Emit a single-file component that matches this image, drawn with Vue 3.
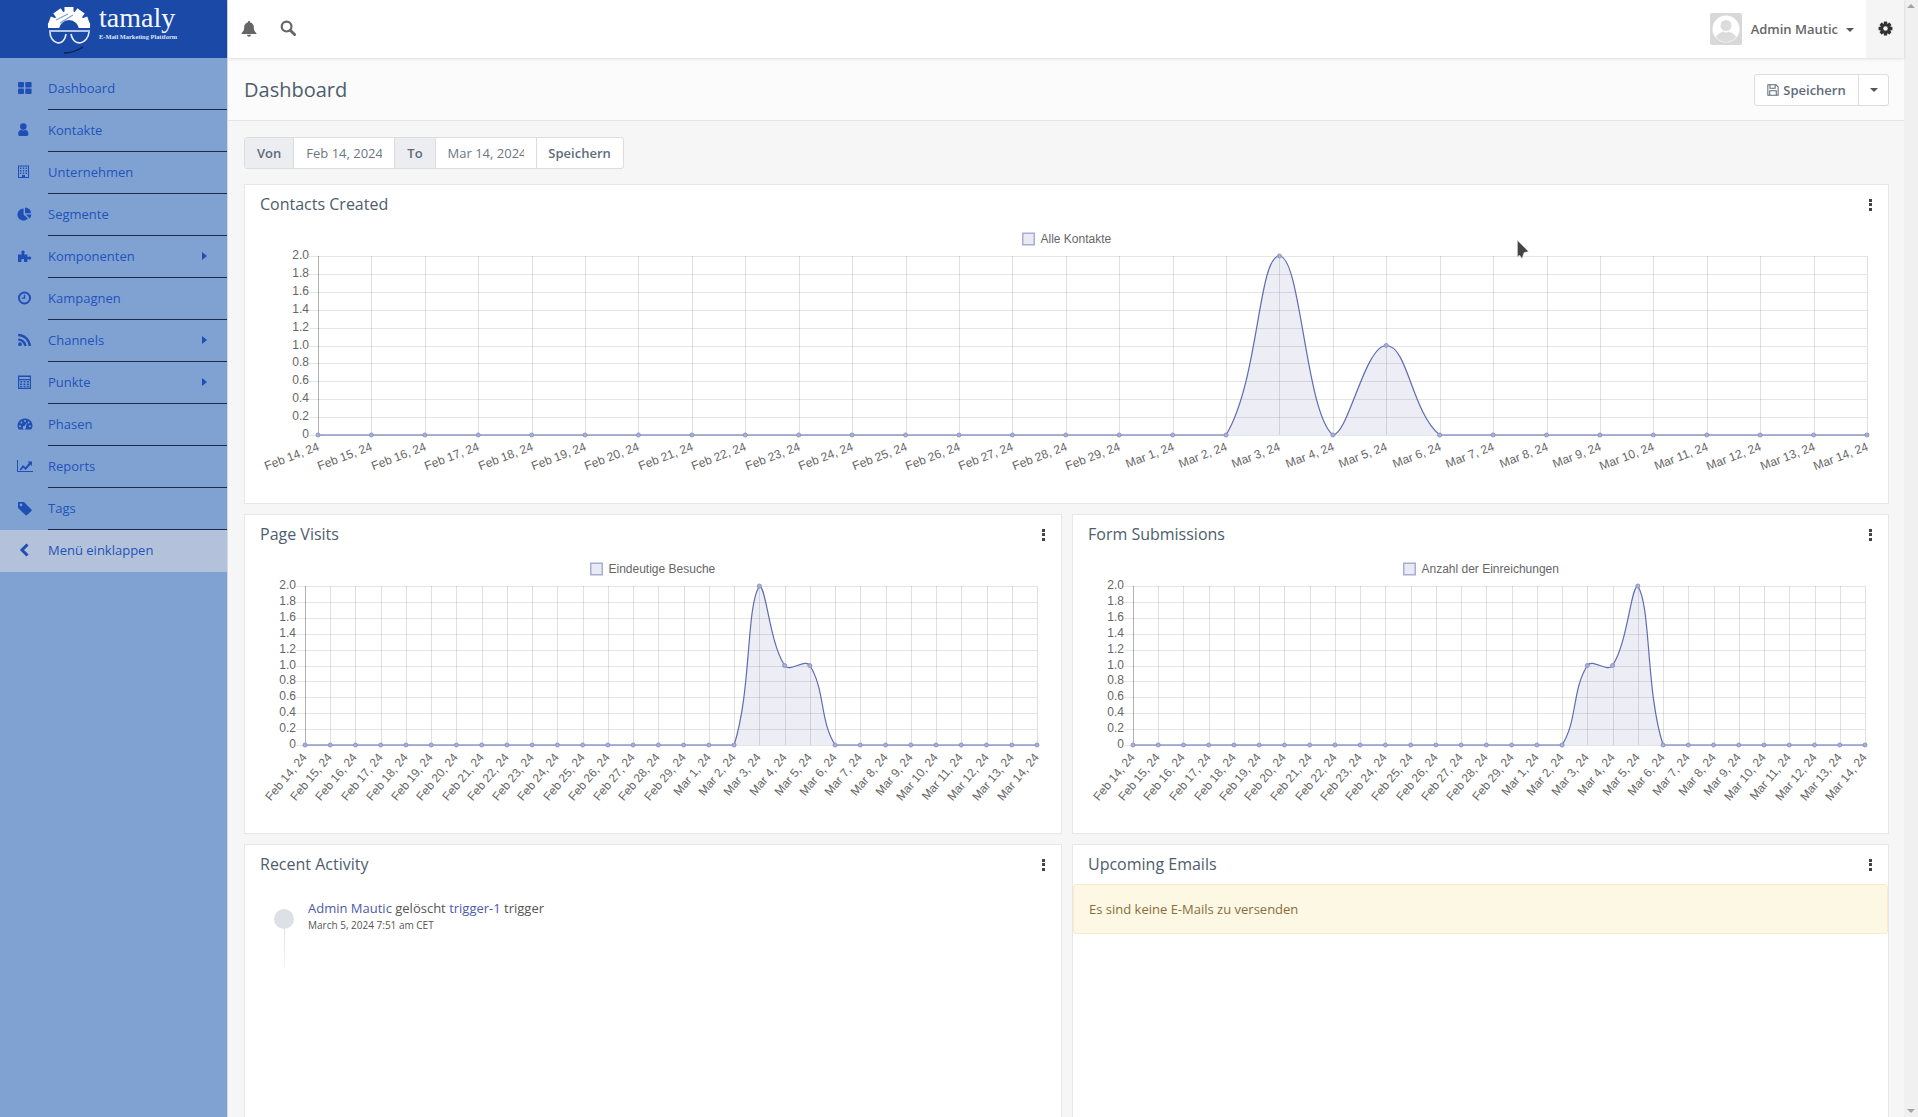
<script setup>
const navItems = [
  { label: "Dashboard", icon: "dashboard" },
  { label: "Kontakte", icon: "user" },
  { label: "Unternehmen", icon: "building" },
  { label: "Segmente", icon: "pie" },
  { label: "Komponenten", icon: "puzzle", sub: true },
  { label: "Kampagnen", icon: "clock" },
  { label: "Channels", icon: "rss", sub: true },
  { label: "Punkte", icon: "calc", sub: true },
  { label: "Phasen", icon: "gauge" },
  { label: "Reports", icon: "line" },
  { label: "Tags", icon: "tag" },
];

// the labels run Feb 14 .. Mar 14 of a leap year
const days = [];
for (let d = 14; d <= 29; d++) days.push(`Feb ${d}, 24`);
for (let d = 1; d <= 14; d++) days.push(`Mar ${d}, 24`);

const TICKS = ["2.0", "1.8", "1.6", "1.4", "1.2", "1.0", "0.8", "0.6", "0.4", "0.2", "0"];

// chart.js style spline with control points capped to the plot area
function splinePath(pts, top, bottom) {
  const t = 0.4;
  const cap = (v) => Math.min(bottom, Math.max(top, v));
  const ctrl = pts.map((p, i) => {
    const a = pts[i - 1] || p;
    const b = pts[i + 1] || p;
    const d1 = Math.hypot(p.x - a.x, p.y - a.y);
    const d2 = Math.hypot(b.x - p.x, b.y - p.y);
    const sum = d1 + d2 || 1;
    const f1 = (t * d1) / sum;
    const f2 = (t * d2) / sum;
    return {
      px: p.x - f1 * (b.x - a.x),
      py: cap(p.y - f1 * (b.y - a.y)),
      nx: p.x + f2 * (b.x - a.x),
      ny: cap(p.y + f2 * (b.y - a.y)),
    };
  });
  let d = `M${pts[0].x} ${pts[0].y}`;
  for (let i = 1; i < pts.length; i++) {
    d += ` C${ctrl[i - 1].nx} ${ctrl[i - 1].ny} ${ctrl[i].px} ${ctrl[i].py} ${pts[i].x} ${pts[i].y}`;
  }
  return d;
}

function makeChart(cfg) {
  const step = (cfg.right - cfg.left) / (days.length - 1);
  const values = days.map(() => 0);
  Object.entries(cfg.data).forEach(([i, v]) => (values[i] = v));
  const pts = values.map((v, i) => ({
    x: cfg.left + i * step,
    y: cfg.bottom - (v / 2) * (cfg.bottom - cfg.top),
  }));
  const line = splinePath(pts, cfg.top, cfg.bottom);
  return {
    ...cfg,
    pts,
    line,
    area: `${line} L${cfg.right} ${cfg.bottom} L${cfg.left} ${cfg.bottom} Z`,
    vLines: days.map((_, i) => Math.round(cfg.left + i * step) + 0.5),
    hLines: TICKS.map((label, i) => ({
      label,
      y: Math.round(cfg.top + (i * (cfg.bottom - cfg.top)) / 10) + 0.5,
    })),
    viewBox: `${cfg.x} ${cfg.y} ${cfg.w} ${cfg.h}`,
  };
}

const contacts = makeChart({
  x: 245, y: 224, w: 1643, h: 279,
  left: 318, right: 1867, top: 256, bottom: 435,
  legend: "Alle Kontakte", boxX: 1022, legendY: 239,
  angle: -21, dx: 0, dy: 11,
  data: { 18: 2, 20: 1 },
});
const visits = makeChart({
  x: 245, y: 554, w: 816, h: 279,
  left: 305, right: 1037, top: 586, bottom: 745,
  legend: "Eindeutige Besuche", boxX: 590, legendY: 569,
  angle: -50, dx: -1, dy: 10,
  data: { 18: 2, 19: 1, 20: 1 },
});
const forms = makeChart({
  x: 1073, y: 554, w: 815, h: 279,
  left: 1133, right: 1865, top: 586, bottom: 745,
  legend: "Anzahl der Einreichungen", boxX: 1403, legendY: 569,
  angle: -50, dx: -1, dy: 10,
  data: { 18: 1, 19: 1, 20: 2 },
});
const panels = [
  { title: "Contacts Created", chart: contacts, wide: true },
  { title: "Page Visits", chart: visits },
  { title: "Form Submissions", chart: forms },
];

const gearTeeth = [0, 45, 90, 135];
const logoTeeth = [-90, -55, -125, -20, -160];
</script>

<template>
  <div class="app">
    <aside class="sidebar">
      <div class="brand">
        <svg class="logo" viewBox="0 0 228 58" width="228" height="58">
          <clipPath id="gearClip"><rect x="40" y="0" width="60" height="28" /></clipPath>
          <g clip-path="url(#gearClip)" fill="#fff">
            <circle cx="69" cy="28" r="17" />
            <rect v-for="a in logoTeeth" :key="a" x="64.5" y="7" width="9" height="10" :transform="`rotate(${a + 90} 69 28)`" />
            <rect x="48" y="23" width="42" height="5" />
            <circle cx="69" cy="30" r="10" fill="#1a49a8" />
            <path d="M56 20 L68 14 M60 23 L73 15" stroke="#7fa2d3" stroke-width="1.2" />
          </g>
          <path d="M49 31 H90 M50 32 C50 44 64 48 66 34 M71 34 C74 48 88 44 89 32" fill="none" stroke="#e8eef8" stroke-width="1.6" />
          <path d="M64 53 C71 53 77 51 83 47" fill="none" stroke="#10204a" stroke-width="1.4" />
          <text x="99" y="27" class="logo-name">tamaly</text>
          <text x="99" y="39" class="logo-sub">E-Mail Marketing Plattform</text>
        </svg>
      </div>
      <ul class="nav">
        <li v-for="item in navItems" :key="item.label" class="nav-item">
          <span class="nav-icon">
            <svg viewBox="0 0 16 16" width="16" height="16" fill="#1f4fb5">
              <template v-if="item.icon === 'dashboard'">
                <rect x="1" y="2" width="6" height="5.4" rx="1" /><rect x="8.2" y="2" width="6.4" height="5.4" rx="1" />
                <rect x="1" y="8.6" width="6" height="5.4" rx="1" /><rect x="8.2" y="8.6" width="6.4" height="5.4" rx="1" />
              </template>
              <template v-else-if="item.icon === 'user'">
                <circle cx="6.3" cy="4.6" r="3.3" />
                <path d="M1.2 12.2 C1.2 9.4 2.6 8 4.2 7.8 C5.4 8.7 7.2 8.7 8.4 7.8 C10 8 11.4 9.4 11.4 12.2 C11.4 13.4 10.6 14 9.6 14 H3 C2 14 1.2 13.4 1.2 12.2 Z" />
              </template>
              <template v-else-if="item.icon === 'building'">
                <path fill-rule="evenodd" d="M1 1.5 H12 V14 H1 Z M2 2.5 V13 H5 V11 H8 V13 H11 V2.5 Z" />
                <path d="M3 3.5 h1.4 v1.4 h-1.4z M5.8 3.5 h1.4 v1.4 h-1.4z M8.6 3.5 h1.4 v1.4 h-1.4z M3 6 h1.4 v1.4 h-1.4z M5.8 6 h1.4 v1.4 h-1.4z M8.6 6 h1.4 v1.4 h-1.4z M3 8.5 h1.4 v1.4 h-1.4z M5.8 8.5 h1.4 v1.4 h-1.4z M8.6 8.5 h1.4 v1.4 h-1.4z" />
              </template>
              <template v-else-if="item.icon === 'pie'">
                <path d="M6.6 2.6 V8.4 L10.9 12.6 A6 6 0 1 1 6.6 2.6 Z" />
                <path d="M8 1.4 A6 6 0 0 1 14 7.2 H8 Z" />
                <path d="M8.8 8.6 H14.4 A6 6 0 0 1 12.6 12.4 Z" />
              </template>
              <template v-else-if="item.icon === 'puzzle'">
                <path d="M1 6.4 H4.4 C5 6.4 5 5.6 4.6 5.1 C3.8 4 4.6 2.6 6 2.6 C7.4 2.6 8.2 4 7.4 5.1 C7 5.6 7 6.4 7.6 6.4 H10.4 V8.6 C10.4 9.2 11.2 9.2 11.7 8.8 C12.8 8 14.2 8.8 14.2 10.1 C14.2 11.4 12.8 12.2 11.7 11.4 C11.2 11 10.4 11 10.4 11.6 V14 H7.4 C6.8 14 6.8 13.2 7 12.8 C7.4 11.9 6.8 11 5.7 11 C4.6 11 4 11.9 4.4 12.8 C4.6 13.2 4.6 14 4 14 H1 Z" />
              </template>
              <template v-else-if="item.icon === 'clock'">
                <path fill-rule="evenodd" d="M7.5 1.5 A6.5 6.5 0 1 1 7.5 14.5 A6.5 6.5 0 1 1 7.5 1.5 Z M7.5 3.4 A4.6 4.6 0 1 0 7.5 12.6 A4.6 4.6 0 1 0 7.5 3.4 Z" />
                <path d="M6.8 4.8 H8.2 V8.8 H4.8 V7.6 H6.8 Z" />
              </template>
              <template v-else-if="item.icon === 'rss'">
                <circle cx="3" cy="12.2" r="1.9" />
                <path d="M1.2 6.4 A8.4 8.4 0 0 1 9.6 14 H7.2 A6 6 0 0 0 1.2 8.8 Z" />
                <path d="M1.2 1.8 A13 13 0 0 1 14 14 H11.6 A10.6 10.6 0 0 0 1.2 4.2 Z" />
              </template>
              <template v-else-if="item.icon === 'calc'">
                <path fill-rule="evenodd" d="M1 1.5 H14 V15 H1 Z M2.2 3 V5 H12.8 V3 Z M2.2 6.2 V13.8 H12.8 V6.2 Z" />
                <path d="M3.2 7 h2 v1.6 h-2z M6.5 7 h2 v1.6 h-2z M9.8 7 h2 v1.6 h-2z M3.2 9.4 h2 v1.6 h-2z M6.5 9.4 h2 v1.6 h-2z M9.8 9.4 h2 v1.6 h-2z M3.2 11.7 h2 v1.6 h-2z M6.5 11.7 h2 v1.6 h-2z M9.8 11.7 h2 v1.6 h-2z" />
              </template>
              <template v-else-if="item.icon === 'gauge'">
                <path fill-rule="evenodd" d="M8 2.4 A7.2 7.2 0 0 1 14.2 13.6 H1.8 A7.2 7.2 0 0 1 8 2.4 Z M8 4 A1 1 0 1 0 8 6 A1 1 0 1 0 8 4 Z M4.4 5.6 A1 1 0 1 0 4.4 7.6 A1 1 0 1 0 4.4 5.6 Z M11.6 5.6 A1 1 0 1 0 11.6 7.6 A1 1 0 1 0 11.6 5.6 Z M3 9.3 A1 1 0 1 0 3 11.3 A1 1 0 1 0 3 9.3 Z M13 9.3 A1 1 0 1 0 13 11.3 A1 1 0 1 0 13 9.3 Z M10 6.6 L7.4 10 A1.6 1.6 0 1 0 8.8 11 Z" />
              </template>
              <template v-else-if="item.icon === 'line'">
                <path d="M0 2 H1 V13 H16 V14 H0 Z" />
                <path d="M2.6 11.5 L6 7 L8.4 9.2 L12 5 L10.4 3.6 H15 V8.2 L13.6 6.6 L8.6 12 L6.2 9.8 L3.8 12.4 Z" />
              </template>
              <template v-else-if="item.icon === 'tag'">
                <path fill-rule="evenodd" d="M1 2 H7 L14.4 9.4 C14.9 9.9 14.9 10.6 14.4 11.1 L10.1 15 C9.6 15.5 8.9 15.5 8.4 15 L1 8 Z M4 3.6 A1.3 1.3 0 1 0 4 6.2 A1.3 1.3 0 1 0 4 3.6 Z" />
              </template>
            </svg>
          </span>
          <span class="nav-label">
            {{ item.label }}
            <i v-if="item.sub" class="nav-arrow"></i>
          </span>
        </li>
        <li class="nav-item collapse">
          <span class="nav-icon">
            <svg viewBox="0 0 16 16" width="16" height="16">
              <path d="M10.5 2.5 L5 8 L10.5 13.5" fill="none" stroke="#1f4fb5" stroke-width="3" />
            </svg>
          </span>
          <span class="nav-label plain">Menü einklappen</span>
        </li>
      </ul>
    </aside>

    <div class="main">
      <header class="topbar">
        <div class="top-left">
          <svg viewBox="0 0 16 16" width="16" height="17" fill="#666">
            <path d="M8 0.6 A1.2 1.2 0 0 1 9.2 1.9 C11.6 2.4 12.8 4.2 12.8 6.6 C12.8 9.8 13.6 11 15.4 12.6 V13.4 H0.6 V12.6 C2.4 11 3.2 9.8 3.2 6.6 C3.2 4.2 4.4 2.4 6.8 1.9 A1.2 1.2 0 0 1 8 0.6 Z" />
            <path d="M6 14.2 H10 A2 2 0 0 1 6 14.2 Z" />
          </svg>
          <svg viewBox="0 0 16 16" width="16" height="16">
            <circle cx="6.6" cy="6.6" r="4.9" fill="none" stroke="#666" stroke-width="2.2" />
            <path d="M10.2 10.2 L14.6 14.6" stroke="#666" stroke-width="2.8" stroke-linecap="round" />
          </svg>
        </div>
        <div class="top-right">
          <div class="avatar">
            <svg viewBox="0 0 32 32" width="32" height="32">
              <rect width="32" height="32" rx="2" fill="#d8d8d8" />
              <circle cx="16" cy="16" r="13.5" fill="#fff" />
              <circle cx="16" cy="12.5" r="5.5" fill="#dcdcdc" />
              <path d="M5.8 24 C8 20 12 19 13.5 18.5 C15 20 17 20 18.5 18.5 C20 19 24 20 26.2 24 A13 13 0 0 1 5.8 24 Z" fill="#dcdcdc" />
            </svg>
          </div>
          <span class="user-name">Admin Mautic</span>
          <i class="caret user-caret"></i>
          <div class="gear-box">
            <svg viewBox="0 0 16 16" width="15" height="15" fill="#333">
              <rect v-for="a in gearTeeth" :key="a" x="6.2" y="0.6" width="3.6" height="14.8" rx="0.6" :transform="`rotate(${a} 8 8)`" />
              <circle cx="8" cy="8" r="5.6" />
              <circle cx="8" cy="8" r="2.4" fill="#f5f5f5" />
            </svg>
          </div>
        </div>
      </header>

      <div class="page-head">
        <h1>Dashboard</h1>
        <div class="btn-group">
          <button class="btn btn-save">
            <svg viewBox="0 0 14 14" width="12" height="12" fill="none" stroke="#5d6c7c" stroke-width="1.2">
              <path d="M1 1 H10.5 L13 3.5 V13 H1 Z" />
              <path d="M3.5 1 V5 H9.5 V1 M3.2 13 V8 H10.8 V13" />
            </svg>
            Speichern
          </button>
          <button class="btn btn-drop"><i class="caret"></i></button>
        </div>
      </div>

      <div class="content">
        <form class="date-range" @submit.prevent>
          <span class="addon">Von</span>
          <input class="date-input" value="Feb 14, 2024" readonly />
          <span class="addon">To</span>
          <input class="date-input" value="Mar 14, 2024" readonly />
          <button class="apply">Speichern</button>
        </form>

        <div class="grid">
          <section v-for="p in panels" :key="p.title" class="panel chart-panel" :class="{ wide: p.wide }">
            <div class="panel-head">
              <h2>{{ p.title }}</h2>
              <span class="kebab"><i></i><i></i><i></i></span>
            </div>
            <svg class="chart" :viewBox="p.chart.viewBox" :width="p.chart.w" :height="p.chart.h">
              <rect :x="p.chart.boxX + 0.75" :y="p.chart.legendY - 5.75" width="11.5" height="11.5" fill="#e9eaf3" stroke="#a7add5" stroke-width="1.5" />
              <text :x="p.chart.boxX + 18.5" :y="p.chart.legendY" class="tick" dominant-baseline="central">{{ p.chart.legend }}</text>

              <line v-for="h in p.chart.hLines" :key="h.label" :x1="p.chart.left - 9" :x2="p.chart.right" :y1="h.y" :y2="h.y" stroke="rgba(0,0,0,.1)" />
              <line v-for="(x, i) in p.chart.vLines" :key="i" :x1="x" :x2="x" :y1="p.chart.top" :y2="p.chart.bottom" :stroke="i === 0 ? 'rgba(0,0,0,.3)' : 'rgba(0,0,0,.12)'" />

              <text v-for="h in p.chart.hLines" :key="h.label" :x="p.chart.left - 9" :y="h.y - 2" class="tick" text-anchor="end" dominant-baseline="central">{{ h.label }}</text>
              <text
                v-for="(d, i) in days"
                :key="d"
                class="tick"
                text-anchor="end"
                dominant-baseline="central"
                :transform="`translate(${p.chart.vLines[i] + p.chart.dx} ${p.chart.bottom + p.chart.dy}) rotate(${p.chart.angle})`"
              >{{ d }}</text>

              <path :d="p.chart.area" fill="rgba(78,91,166,.11)" />
              <path :d="p.chart.line" fill="none" stroke="#5f6bb0" stroke-width="1.2" />
              <circle v-for="(pt, i) in p.chart.pts" :key="i" :cx="pt.x" :cy="pt.y" r="2" fill="#aab0d6" stroke="#8c94c6" />
            </svg>
          </section>

          <section class="panel tall">
            <div class="panel-head">
              <h2>Recent Activity</h2>
              <span class="kebab"><i></i><i></i><i></i></span>
            </div>
            <div class="activity">
              <div class="rail"><span class="dot"></span><span class="stem"></span></div>
              <div class="activity-text">
                <p class="event"><a>Admin Mautic</a> gelöscht <a>trigger-1</a> trigger</p>
                <p class="when">March 5, 2024 7:51 am CET</p>
              </div>
            </div>
          </section>

          <section class="panel tall">
            <div class="panel-head">
              <h2>Upcoming Emails</h2>
              <span class="kebab"><i></i><i></i><i></i></span>
            </div>
            <div class="alert">Es sind keine E-Mails zu versenden</div>
          </section>
        </div>
      </div>
    </div>

    <div class="scrollbar">
      <i class="arrow-up"></i>
      <i class="arrow-down"></i>
    </div>

    <svg class="cursor" viewBox="0 0 12 20" width="12" height="20">
      <path d="M0.5 0.5 L11.5 11.5 L7 12.5 L5 18.5 L2.5 15 L0.5 17 Z" fill="#444" stroke="#ddd" stroke-width="0.4" />
    </svg>
  </div>
</template>

<style scoped>
.app {
  position: relative;
  display: flex;
  width: 1918px;
  height: 1117px;
  overflow: hidden;
  background: #f6f6f6;
  font-family: "Open Sans", sans-serif;
  font-size: 13px;
  color: #555;
}

.sidebar {
  width: 228px;
  flex: none;
  background: #80a2d3;
  border-right: 1px solid #d5d9e0;
  box-sizing: border-box;
}
.brand {
  height: 58px;
  background: #1a49a8;
}
.logo { display: block; }
.logo-name { font-family: "Liberation Serif", serif; font-size: 28px; fill: #f4f7fc; }
.logo-sub { font-family: "Liberation Serif", serif; font-size: 6.4px; font-weight: 700; fill: #dfe7f5; }

.nav {
  list-style: none;
  margin: 0;
  padding: 10px 0 0;
}
.nav-item {
  display: flex;
  height: 42px;
  color: #2353b9;
}
.nav-icon {
  width: 48px;
  flex: none;
  display: flex;
  align-items: center;
  padding: 0 0 2px 17px;
  box-sizing: border-box;
}
.nav-label {
  flex: 1;
  display: flex;
  align-items: center;
  justify-content: space-between;
  padding: 0 20px 2px 0;
  border-bottom: 1px solid #1b2a4c;
}
.nav-label.plain { border-bottom: 0; }
.nav-arrow {
  width: 0;
  height: 0;
  border-left: 5px solid #1f4fb5;
  border-top: 4.5px solid transparent;
  border-bottom: 4.5px solid transparent;
}
.collapse { background: #b3c2da; }

.main {
  flex: 1;
  min-width: 0;
  display: flex;
  flex-direction: column;
}
.topbar {
  position: relative;
  z-index: 1;
  height: 58px;
  flex: none;
  background: #fff;
  box-shadow: 0 1px 3px rgba(0, 0, 0, 0.12);
  display: flex;
  align-items: center;
  justify-content: space-between;
}
.top-left {
  display: flex;
  align-items: center;
  gap: 23px;
  padding: 0 0 2px 13px;
}
.top-right {
  display: flex;
  align-items: center;
  height: 100%;
}
.avatar { width: 32px; height: 32px; margin-right: 9px; }
.user-name { font-weight: 600; color: #666; }
.caret {
  display: inline-block;
  width: 0;
  height: 0;
  border-top: 4px solid #555;
  border-left: 4px solid transparent;
  border-right: 4px solid transparent;
}
.user-caret { margin: 1px 12px 0 8px; }
.gear-box {
  width: 38px;
  height: 100%;
  background: #f5f5f5;
  display: flex;
  align-items: center;
  justify-content: center;
  padding-bottom: 2px;
  box-sizing: border-box;
}

.page-head {
  height: 63px;
  flex: none;
  box-sizing: border-box;
  background: #fbfbfb;
  border-bottom: 1px solid #e5e5e5;
  display: flex;
  align-items: flex-start;
  justify-content: space-between;
  padding: 16px 15px 0 16px;
}
h1 {
  margin: 1px 0 0;
  font-size: 20px;
  font-weight: 400;
  line-height: 30px;
  color: #4e5d6e;
}
.btn-group { display: flex; }
.btn {
  height: 32px;
  background: #fff;
  border: 1px solid #ddd;
  font: 600 13px "Open Sans", sans-serif;
  color: #5d6c7c;
  display: flex;
  align-items: center;
  justify-content: center;
  padding: 0;
  box-sizing: border-box;
}
.btn-save {
  width: 105px;
  gap: 4px;
  border-radius: 3px 0 0 3px;
}
.btn-drop {
  width: 31px;
  margin-left: -1px;
  border-radius: 0 3px 3px 0;
}

.content { padding: 16px 16px 0; }
.date-range {
  display: flex;
  width: max-content;
  height: 32px;
  margin-bottom: 15px;
  background: #fff;
  border: 1px solid #ddd;
  border-radius: 3px;
  box-sizing: border-box;
}
.addon {
  display: flex;
  align-items: center;
  padding: 0 12px;
  background: #ebedf0;
  font-weight: 600;
  color: #5d6c7c;
  border-right: 1px solid #ddd;
}
.date-input {
  width: 101px;
  padding: 0 12px;
  border: 0;
  border-right: 1px solid #ddd;
  box-sizing: border-box;
  font: 13px "Open Sans", sans-serif;
  color: #6b7785;
  outline: none;
}
.apply {
  width: 86px;
  border: 0;
  background: none;
  padding: 0;
  font: 600 13px "Open Sans", sans-serif;
  color: #5d6c7c;
}

.grid {
  display: grid;
  grid-template-columns: 1fr 1fr;
  gap: 10px;
}
.panel {
  background: #fff;
  border: 1px solid #e7e7e7;
  box-sizing: border-box;
}
.chart-panel { height: 320px; }
.wide { grid-column: 1 / -1; }
.tall { height: 320px; }
.panel-head {
  height: 39px;
  display: flex;
  align-items: center;
  justify-content: space-between;
  padding: 0 16px 2px 15px;
  box-sizing: border-box;
}
h2 {
  margin: 0;
  font-size: 16px;
  font-weight: 400;
  color: #4e5d6e;
}
.kebab {
  display: flex;
  flex-direction: column;
  gap: 1.5px;
  margin-top: 2px;
}
.kebab i {
  width: 3px;
  height: 3px;
  background: #444;
}
.chart { display: block; }
.tick {
  font-family: "Liberation Sans", sans-serif;
  font-size: 12px;
  fill: #666;
}

.activity {
  display: flex;
  gap: 14px;
  padding: 15px 0 0 29px;
}
.rail {
  display: flex;
  flex-direction: column;
  align-items: center;
  padding-top: 10px;
}
.dot {
  width: 20px;
  height: 20px;
  border-radius: 50%;
  background: #dde0e5;
}
.stem {
  width: 1px;
  height: 38px;
  background: linear-gradient(#dfe1e5, #f4f4f5);
}
.event {
  margin: 0;
  line-height: 18px;
  color: #555;
}
.event a { color: #4e5ba6; }
.when {
  margin: 1px 0 0;
  font-size: 10px;
  line-height: 15px;
  color: #555;
}
.alert {
  height: 50px;
  display: flex;
  align-items: center;
  padding-left: 15px;
  background: #fcf8e3;
  border: 1px solid #faebcc;
  border-radius: 3px;
  color: #8a6d3b;
  box-sizing: border-box;
}

.scrollbar {
  position: relative;
  width: 14px;
  flex: none;
  background: #f0f0f0;
}
.arrow-up, .arrow-down {
  position: absolute;
  left: 3px;
  width: 0;
  height: 0;
  border-left: 4px solid transparent;
  border-right: 4px solid transparent;
}
.arrow-up { top: 4px; border-bottom: 4px solid #a3a3a3; }
.arrow-down { bottom: 4px; border-top: 4px solid #a3a3a3; }

.cursor {
  position: absolute;
  left: 1517px;
  top: 240px;
}
</style>

<style>
html, body { margin: 0; background: #f6f6f6; }
</style>
